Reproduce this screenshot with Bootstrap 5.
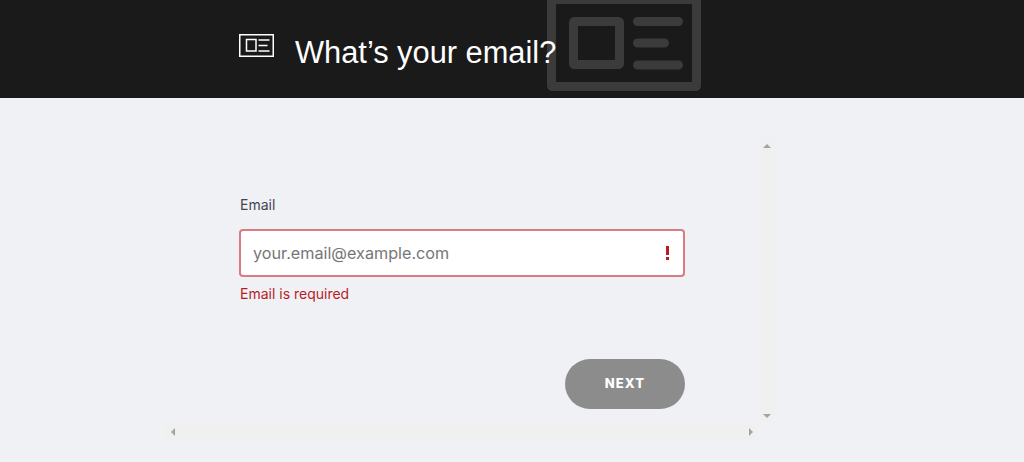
<!DOCTYPE html>
<html lang="en">

<head>
    <meta charset="UTF-8">
    <meta name="viewport" content="width=device-width, initial-scale=1.0">
    <title>What's your email?</title>

    <link href="https://cdn.jsdelivr.net/npm/bootstrap@5.3.0/dist/css/bootstrap.min.css" rel="stylesheet">
    <script src="https://cdn.jsdelivr.net/npm/bootstrap@5.3.0/dist/js/bootstrap.bundle.min.js"></script>

    <style>
        body {
            background: #f0f1f5;
            font-family: "Inter", "Liberation Sans", sans-serif;
            height: 462px;
            overflow: hidden;
        }

        .top-head {
            height: 98px;
            background: #1a1a1a;
            padding-left: 239px;
            overflow: hidden;
        }

        .head-icon {
            margin-top: 34px;
            margin-right: 21px;
        }

        .head-title {
            position: relative;
            z-index: 1;
            font-family: "Liberation Sans", "Roboto", sans-serif;
            font-size: 30.8px;
            font-weight: 400;
            line-height: 36px;
            margin: 35px 0 0;
            color: #fff;
        }

        .head-bg {
            position: absolute;
            left: 547px;
            top: -5px;
        }

        .scroll-frame {
            width: 610px;
            margin: 40px 0 0 165px;
            display: grid;
            grid-template-columns: 594px 16px;
            grid-template-rows: 285px 17px;
        }

        .scroll-body {
            padding: 59px 0 0 74px;
        }

        .bar-y,
        .bar-x {
            background: #f0f0f0;
            display: flex;
            justify-content: space-between;
            align-items: center;
        }

        .bar-y {
            flex-direction: column;
            padding: 6px 0 5px;
        }

        .bar-x {
            padding: 0 6px 0 6px;
        }

        .arrow-up {
            border-left: 4px solid transparent;
            border-right: 4px solid transparent;
            border-bottom: 4px solid #a3a3a3;
        }

        .arrow-down {
            border-left: 4px solid transparent;
            border-right: 4px solid transparent;
            border-top: 4px solid #a3a3a3;
        }

        .arrow-left {
            border-top: 4px solid transparent;
            border-bottom: 4px solid transparent;
            border-right: 4px solid #a3a3a3;
        }

        .arrow-right {
            border-top: 4px solid transparent;
            border-bottom: 4px solid transparent;
            border-left: 4px solid #a3a3a3;
        }

        .mail-form {
            width: 446px;
        }

        .mail-label {
            font-size: 14px;
            line-height: 16px;
            color: #3f4650;
            margin: 0 0 16px 1px;
            display: block;
        }

        .mail-field {
            position: relative;
        }

        .mail-field .form-control {
            height: 48px;
            border: 2px solid #d97c81;
            border-radius: 4px;
            padding: 0 40px 0 12px;
            font-size: 16.2px;
            background-image: none;
            box-shadow: none;
        }

        .mail-field .form-control::placeholder {
            color: #767676;
            opacity: 1;
        }

        .mail-bang {
            position: absolute;
            right: 15px;
            top: 17px;
            width: 5px;
            height: 14px;
        }

        .mail-error {
            font-size: 14px;
            line-height: 16px;
            color: #b71c24;
            margin: 9px 0 0 1px;
        }

        .next-btn {
            width: 120px;
            height: 50px;
            border-radius: 25px;
            background: #8c8c8c;
            border: 0;
            color: #fff;
            font-family: "Inter", "Liberation Sans", sans-serif;
            font-size: 13px;
            font-weight: 800;
            letter-spacing: 1.1px;
            margin-top: 57px;
        }

        .next-btn:disabled {
            background: #8c8c8c;
            color: #fff;
            opacity: 1;
        }
    </style>
</head>

<body>
    <header class="top-head d-flex align-items-start">
        <svg class="head-icon flex-shrink-0" width="35" height="23" viewBox="0 0 35 23" fill="none" stroke="#fff">
            <rect x="0.75" y="0.75" width="33.500" height="21.500" stroke-width="1.5" />
            <rect x="7.500" y="5.500" width="9.500" height="11.500" stroke-width="1.5" />
            <path d="M19.500 6h11M19.500 11.500h9M19.500 17h11" stroke-width="1.5" />
        </svg>
        <h1 class="head-title">What’s your email?</h1>
        <svg class="head-bg" width="154" height="96" viewBox="0 0 154 96" fill="none" stroke="#3b3b3b">
            <rect x="4.500" y="4.500" width="145" height="87" rx="1" stroke-width="9" />
            <rect x="26.500" y="26.500" width="46" height="43" rx="1" stroke-width="9" />
            <path d="M90.500 26.500h41M90.500 48h27M90.500 70h41" stroke-width="9" stroke-linecap="round" />
        </svg>
    </header>

    <div class="scroll-frame">
        <main class="scroll-body">
            <form class="mail-form d-flex flex-column">
                <label class="mail-label" for="mailInput">Email</label>
                <div class="mail-field">
                    <input type="email" id="mailInput" class="form-control" placeholder="your.email@example.com">
                    <svg class="mail-bang" viewBox="0 0 5 14" fill="#b71c24">
                        <rect x="1" y="0" width="3" height="9" />
                        <rect x="1" y="11" width="3" height="3" />
                    </svg>
                </div>
                <div class="mail-error">Email is required</div>
                <button type="button" class="btn next-btn align-self-end p-0" disabled>NEXT</button>
            </form>
        </main>
        <div class="bar-y">
            <span class="arrow-up"></span>
            <span class="arrow-down"></span>
        </div>
        <div class="bar-x">
            <span class="arrow-left"></span>
            <span class="arrow-right"></span>
        </div>
    </div>
</body>

</html>
